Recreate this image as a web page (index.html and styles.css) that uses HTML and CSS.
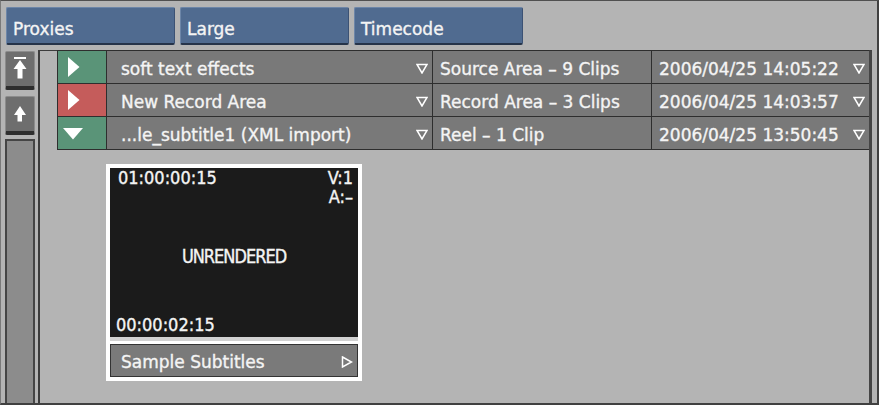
FILE: index.html
```html
<!DOCTYPE html>
<html>
<head>
<meta charset="utf-8">
<link rel="stylesheet" href="styles.css">
</head>
<body>
<div class="app">
  <div class="toolbar">
    <div class="tbtn">Proxies</div>
    <div class="tbtn">Large</div>
    <div class="tbtn">Timecode</div>
  </div>
  <div class="main">
    <div class="scrollcol">
      <div class="sbtn">
        <svg width="14" height="24" viewBox="0 0 14 24"><rect x="1" y="0" width="12" height="2" fill="#fff"/><polygon points="7,3 0.5,12 4.5,12 4.5,21.5 9.5,21.5 9.5,12 13.5,12" fill="#fff"/></svg>
      </div>
      <div class="sbtn">
        <svg width="14" height="18" viewBox="0 0 14 18"><polygon points="7,0 1,9 4.5,9 4.5,15.5 9,15.5 9,9 13,9" fill="#fff"/></svg>
      </div>
      <div class="trough"></div>
    </div>
    <div class="panel">
      <div class="table">
        <div class="cell status green">
          <svg class="play" width="12" height="20" viewBox="0 0 12 20"><polygon points="0,0 11.5,10 0,20" fill="#fff"/></svg>
        </div>
        <div class="cell name"><span>soft text effects</span><svg class="dd" width="12" height="11" viewBox="0 0 12 11"><polygon points="1,1.5 11,1.5 6,10" fill="none" stroke="#fff" stroke-width="1.5"/></svg></div>
        <div class="cell type">Source Area – 9 Clips</div>
        <div class="cell date"><span>2006/04/25 14:05:22</span><svg class="dd" width="12" height="11" viewBox="0 0 12 11"><polygon points="1,1.5 11,1.5 6,10" fill="none" stroke="#fff" stroke-width="1.5"/></svg></div>

        <div class="cell status red">
          <svg class="play" width="12" height="20" viewBox="0 0 12 20"><polygon points="0,0 11.5,10 0,20" fill="#fff"/></svg>
        </div>
        <div class="cell name"><span>New Record Area</span><svg class="dd" width="12" height="11" viewBox="0 0 12 11"><polygon points="1,1.5 11,1.5 6,10" fill="none" stroke="#fff" stroke-width="1.5"/></svg></div>
        <div class="cell type">Record Area – 3 Clips</div>
        <div class="cell date"><span>2006/04/25 14:03:57</span><svg class="dd" width="12" height="11" viewBox="0 0 12 11"><polygon points="1,1.5 11,1.5 6,10" fill="none" stroke="#fff" stroke-width="1.5"/></svg></div>

        <div class="cell status green">
          <svg class="down" width="20" height="12" viewBox="0 0 20 12"><polygon points="0,0 20,0 10,11.5" fill="#fff"/></svg>
        </div>
        <div class="cell name"><span>...le_subtitle1 (XML import)</span><svg class="dd" width="12" height="11" viewBox="0 0 12 11"><polygon points="1,1.5 11,1.5 6,10" fill="none" stroke="#fff" stroke-width="1.5"/></svg></div>
        <div class="cell type">Reel – 1 Clip</div>
        <div class="cell date"><span>2006/04/25 13:50:45</span><svg class="dd" width="12" height="11" viewBox="0 0 12 11"><polygon points="1,1.5 11,1.5 6,10" fill="none" stroke="#fff" stroke-width="1.5"/></svg></div>
      </div>

      <div class="thumb">
        <div class="screen">
          <div class="tc-in">01:00:00:15</div>
          <div class="tracks"><div>V:1</div><div>A:–</div></div>
          <div class="unrendered">UNRENDERED</div>
          <div class="tc-dur">00:00:02:15</div>
        </div>
        <div class="sep"></div>
        <div class="clipbar">
          <span>Sample Subtitles</span>
          <svg width="12" height="12" viewBox="0 0 12 12"><polygon points="1.5,1 10.5,6 1.5,11" fill="none" stroke="#fff" stroke-width="1.5"/></svg>
        </div>
      </div>
    </div>
  </div>
</div>
</body>
</html>
```
FILE: styles.css
```css
html, body {
  margin: 0;
  padding: 0;
  background: #b4b4b4;
}
body {
  width: 879px;
  height: 405px;
  overflow: hidden;
  font-family: "DejaVu Sans", "Noto Sans", sans-serif;
  color: #f4f4f4;
  -webkit-text-stroke: 0.35px #f4f4f4;
}
.app {
  box-sizing: border-box;
  width: 879px;
  height: 405px;
  border-top: 1px solid #505050;
  border-left: 1px solid #7a7a7a;
  border-right: 2px solid #404040;
  border-bottom: 2px solid #404040;
  display: flex;
  flex-direction: column;
}
.toolbar {
  display: flex;
  gap: 5px;
  padding: 6px 0 0 5px;
  height: 38px;
}
.tbtn {
  box-sizing: border-box;
  width: 169px;
  height: 38px;
  background: #506b90;
  border-top: 1px solid #6d86a8;
  border-left: 1px solid #6d86a8;
  border-right: 1px solid #3c5274;
  border-bottom: 2px solid #26344a;
  border-radius: 2px;
  font-size: 17px;
  line-height: 20px;
  padding: 11px 0 0 6px;
}
.main {
  flex: 1;
  display: flex;
  margin-top: 5px;
  min-height: 0;
}
.scrollcol {
  width: 30px;
  margin-left: 4px;
  padding-top: 1px;
  display: flex;
  flex-direction: column;
  gap: 6px;
}
.sbtn {
  box-sizing: border-box;
  height: 39px;
  background: #6e6e6e;
  border: 1px solid #8c8c8c;
  border-bottom: 4px solid #2e2e2e;
  border-radius: 2px;
  display: flex;
  align-items: center;
  justify-content: center;
}
.sbtn + .sbtn svg { margin-top: 1px; }
.trough {
  flex: 1;
  margin-top: -2px;
  background: #8c8c8c;
  border: 2px solid #454545;
  border-bottom: none;
}
.panel {
  flex: 1;
  margin-left: 3px;
  margin-right: 5px;
  border-left: 2px solid #3c3c3c;
  border-top: 1px solid #3c3c3c;
  border-right: 3px solid #454545;
  padding-left: 17px;
  min-width: 0;
}
.table {
  display: grid;
  grid-template-columns: 48px 325px 218px 1fr;
  grid-auto-rows: 32px;
  gap: 1px;
  padding: 1px 0 1px 1px;
  margin-top: -1px;
  background: #2e2e2e;
}
.cell {
  box-sizing: border-box;
  background: #797979;
  font-size: 17px;
  line-height: 20px;
  padding-top: 3px;
  white-space: nowrap;
  display: flex;
  align-items: center;
}
.status { padding-top: 0; }
.status.green { background: #5a9478; }
.status.red { background: #c55c5b; }
.play { margin-left: 10px; }
.down { margin-left: 5px; margin-top: 1px; }
.name { padding-left: 14px; padding-right: 4px; justify-content: space-between; }
.type { padding-left: 7px; }
.date { padding-left: 7px; padding-right: 4px; justify-content: space-between; }
.dd { margin-top: -1px; }

.thumb {
  width: 248px;
  margin: 14px 0 0 49px;
  background: #ffffff;
  padding: 4px;
}
.screen {
  position: relative;
  height: 169px;
  background: #1b1b1b;
  font-family: "DejaVu Sans Condensed", "DejaVu Sans", sans-serif;
  font-size: 18px;
}
.tc-in {
  position: absolute;
  left: 8px;
  top: 0px;
  line-height: 20px;
}
.tracks {
  position: absolute;
  right: 5px;
  top: 0px;
  line-height: 19px;
  text-align: right;
}
.unrendered {
  position: absolute;
  left: 0;
  right: 0;
  top: 78px;
  text-align: center;
  letter-spacing: -1px;
  line-height: 20px;
  transform: scaleY(1.12);
}
.tc-dur {
  position: absolute;
  left: 6px;
  bottom: 2px;
  line-height: 20px;
}
.sep {
  height: 4px;
  background: #d2d2d2;
  margin-bottom: 3px;
}
.clipbar {
  box-sizing: border-box;
  height: 33px;
  background: #7a7a7a;
  border: 1px solid #333;
  display: flex;
  align-items: center;
  justify-content: space-between;
  padding: 2px 4px 0 10px;
  font-size: 17px;
}
```
